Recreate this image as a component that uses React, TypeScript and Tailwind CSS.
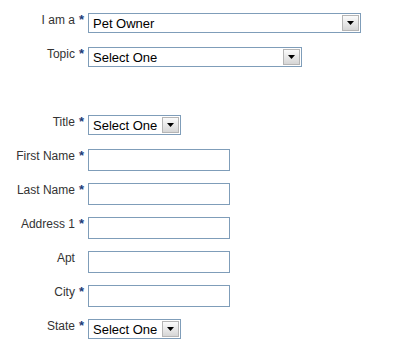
import React from 'react';

type Field =
  | { kind: 'select'; label: string; value: string; width: string; required?: boolean }
  | { kind: 'input'; label: string; required?: boolean }
  | { kind: 'spacer' };

const FIELDS: Field[] = [
  { kind: 'select', label: 'I am a', value: 'Pet Owner', width: 'w-[273px]', required: true },
  { kind: 'select', label: 'Topic', value: 'Select One', width: 'w-[214px]', required: true },
  { kind: 'spacer' },
  { kind: 'select', label: 'Title', value: 'Select One', width: 'w-[93px]', required: true },
  { kind: 'input', label: 'First Name', required: true },
  { kind: 'input', label: 'Last Name', required: true },
  { kind: 'input', label: 'Address 1', required: true },
  { kind: 'input', label: 'Apt' },
  { kind: 'input', label: 'City', required: true },
  { kind: 'select', label: 'State', value: 'Select One', width: 'w-[93px]', required: true },
];

function Label({ text, required }: { text: string; required?: boolean }) {
  return (
    <div className="w-[84px] shrink-0 text-right text-[12px] leading-[14px] text-[#333333] whitespace-nowrap">
      {text}
      <span className={`ml-[4px] text-[13px] font-bold text-[#1c3c78] ${required ? '' : 'invisible'}`}>*</span>
    </div>
  );
}

function FakeSelect({ value, width }: { value: string; width: string }) {
  return (
    <div className={`${width} h-[20px] flex items-stretch border border-[#7f9db9] bg-white`}>
      <span className="flex-1 pl-[4px] pt-[1px] text-[13px] leading-[17px] text-black whitespace-nowrap overflow-hidden">
        {value}
      </span>
      <span className="w-[17px] my-[1px] mr-[1px] flex items-center justify-center border border-[#b5b5b5] bg-gradient-to-b from-[#fbfbfb] to-[#d6d6d6]">
        <svg width="7" height="4" viewBox="0 0 7 4">
          <path d="M0 0H7L3.5 4Z" fill="#000" />
        </svg>
      </span>
    </div>
  );
}

export default function App() {
  return (
    <div className="w-[404px] h-[345px] bg-white pt-[13px] font-['Liberation_Sans',Arial,sans-serif]">
      {FIELDS.map((f, i) => {
        if (f.kind === 'spacer') return <div key={i} className="h-[34px]" />;
        return (
          <div key={i} className="h-[34px] flex items-start">
            <Label text={f.label} required={f.required} />
            <div className="ml-[4px]">
              {f.kind === 'select' ? (
                <FakeSelect value={f.value} width={f.width} />
              ) : (
                <input
                  type="text"
                  className="block w-[142px] h-[22px] border border-[#7f9db9] bg-white px-1 text-[13px] outline-none"
                />
              )}
            </div>
          </div>
        );
      })}
    </div>
  );
}
